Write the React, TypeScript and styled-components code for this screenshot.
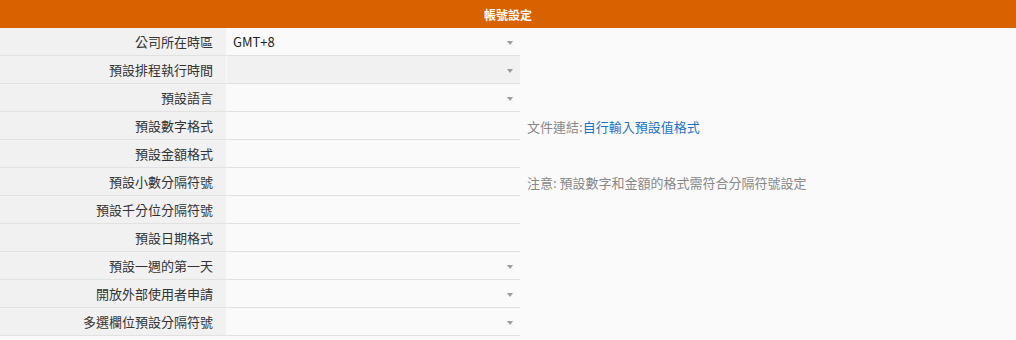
import React from 'react';
import styled, {createGlobalStyle} from 'styled-components';

const GlobalStyle = createGlobalStyle`
    body {
        margin: 0;
        background: #fafafa;
        font-family: "Noto Sans CJK TC", "Noto Sans", sans-serif;
    }
`;

const Wrapper = styled.div`
    width: 1016px;
    height: 340px;
    background: #fafafa;
`;

const Header = styled.div`
    height: 28px;
    background: #d96200;
    color: #fff;
    font-size: 12px;
    font-weight: 700;
    display: flex;
    align-items: center;
    justify-content: center;
`;

const Row = styled.div`
    display: flex;
    height: 28px;
`;

const Label = styled.div`
    width: 213px;
    padding-right: 13px;
    background: #f1f1f1;
    border-bottom: 1px solid #e1e1e1;
    border-right: 1px solid #fafafa;
    display: flex;
    align-items: center;
    justify-content: flex-end;
    font-size: 13px;
    color: #333;
    box-sizing: content-box;
`;

const Value = styled.div<{disabled?: boolean}>`
    width: 280px;
    padding: 0 7px 0 6px;
    background: ${(p) => (p.disabled ? '#f1f1f1' : '#fafafa')};
    border-bottom: 1px solid #e1e1e1;
    display: flex;
    align-items: center;
    justify-content: space-between;
    font-size: 13px;
    color: #222;
    box-sizing: content-box;
`;

const Caret = styled.span`
    width: 0;
    height: 0;
    border-left: 3.5px solid transparent;
    border-right: 3.5px solid transparent;
    border-top: 4px solid #9a9a9a;
    margin-top: 2px;
`;

const Note = styled.div`
    padding-left: 7px;
    display: flex;
    align-items: center;
    font-size: 13px;
    color: #888;
`;

const Link = styled.a`
    color: #1a73c9;
    text-decoration: none;
`;

interface Field {
    label: string;
    value?: string;
    select?: boolean;
    disabled?: boolean;
    note?: React.ReactNode;
}

const fields: Field[] = [
    {label: '公司所在時區', value: 'GMT+8', select: true},
    {label: '預設排程執行時間', select: true, disabled: true},
    {label: '預設語言', select: true},
    {
        label: '預設數字格式',
        note: (
            <>
                文件連結:<Link href="#">自行輸入預設值格式</Link>
            </>
        ),
    },
    {label: '預設金額格式'},
    {label: '預設小數分隔符號', note: '注意: 預設數字和金額的格式需符合分隔符號設定'},
    {label: '預設千分位分隔符號'},
    {label: '預設日期格式'},
    {label: '預設一週的第一天', select: true},
    {label: '開放外部使用者申請', select: true},
    {label: '多選欄位預設分隔符號', select: true},
];

export default function App() {
    return (
        <Wrapper>
            <GlobalStyle />
            <Header>帳號設定</Header>
            {fields.map((field) => (
                <Row key={field.label}>
                    <Label>{field.label}</Label>
                    <Value disabled={field.disabled}>
                        <span>{field.value}</span>
                        {field.select && <Caret />}
                    </Value>
                    {field.note && <Note>{field.note}</Note>}
                </Row>
            ))}
        </Wrapper>
    );
}
